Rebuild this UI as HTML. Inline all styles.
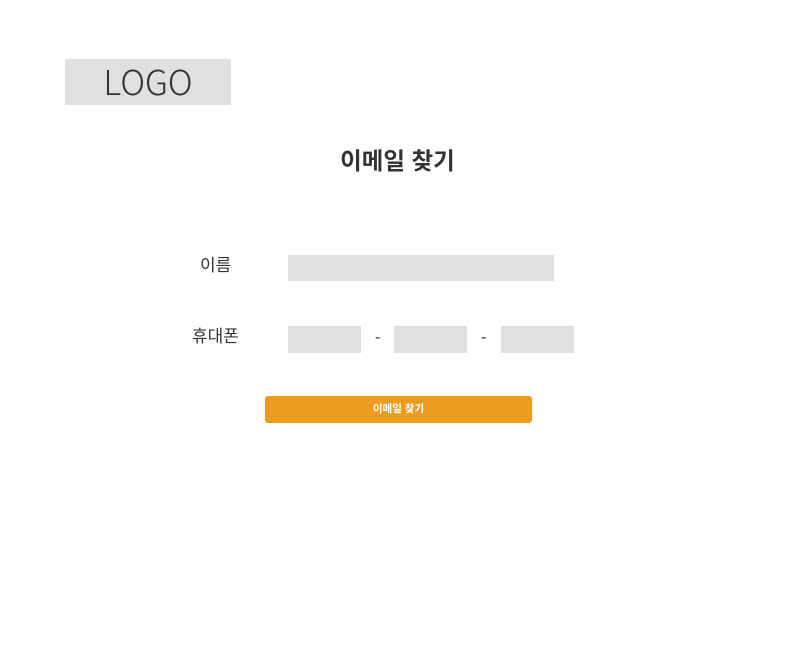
<!DOCTYPE html>
<html><head><meta charset="utf-8"><style>
body{margin:0;width:795px;height:661px;background:#fff;position:relative;font-family:"Liberation Sans","Noto Sans CJK KR",sans-serif;color:#333;overflow:hidden}
.a{position:absolute}
.g{background:#e0e0e0}
</style></head><body>
<div class="a g" style="left:65px;top:59px;width:166px;height:46px;text-align:center;line-height:44px;font-size:34px;color:#333;font-family:'Noto Sans CJK KR','Liberation Sans',sans-serif;font-weight:300">LOGO</div>
<div class="a" style="left:0;width:795px;top:145px;text-align:center;font-size:23.5px;font-weight:bold;line-height:32px">이메일 찾기</div>
<div class="a" style="left:200px;top:255px;font-size:17px;line-height:22px">이름</div>
<div class="a g" style="left:288px;top:255px;width:266px;height:26px"></div>
<div class="a" style="left:192px;top:326px;font-size:17px;line-height:22px">휴대폰</div>
<div class="a g" style="left:288px;top:326px;width:73px;height:27px"></div>
<div class="a" style="left:375px;top:328px;font-size:16px;line-height:20px">-</div>
<div class="a g" style="left:394px;top:326px;width:73px;height:27px"></div>
<div class="a" style="left:481px;top:328px;font-size:16px;line-height:20px">-</div>
<div class="a g" style="left:501px;top:326px;width:73px;height:27px"></div>
<div class="a" style="left:265px;top:396px;width:267px;height:27px;background:#ed9c22;border-radius:3px;color:#fff;font-size:10.5px;font-weight:bold;text-align:center;line-height:27px">이메일 찾기</div>
</body></html>
